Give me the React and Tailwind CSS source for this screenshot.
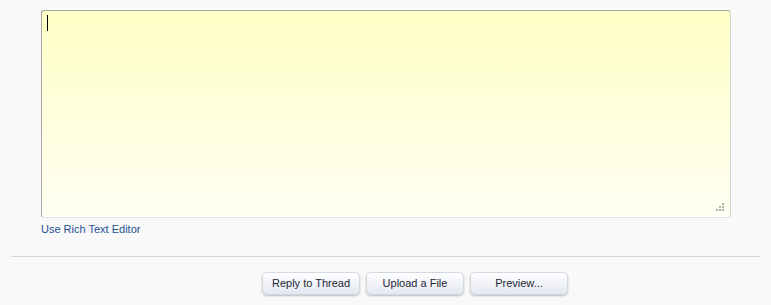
import React from 'react';

const Grip = () => (
    <svg width="9" height="9" viewBox="0 0 9 9" className="absolute right-[5px] bottom-[5px]">
        {[[7, 1], [4, 4], [7, 4], [1, 7], [4, 7], [7, 7]].map(([x, y], i) => (
            <rect key={i} x={x - 1} y={y - 1} width="2" height="2" fill="#b3b3b3" />
        ))}
    </svg>
);

const Button = ({ children, width }) => (
    <button
        className={`${width} h-[23px] rounded-[5px] border border-[#d4d7e0] bg-gradient-to-b from-[#ffffff] to-[#e4e8f2] text-[11px] text-[#1e2633] shadow-[0_1px_2px_rgba(0,0,0,0.25)]`}
    >
        {children}
    </button>
);

export default function App() {
    return (
        <div className="w-full h-[305px] bg-[#f9f9fa] pt-[10px]" style={{ fontFamily: '"Liberation Sans", Arial, sans-serif' }}>
            <div className="relative ml-[41px] w-[690px] h-[208px] rounded-[3px] border border-[#a6a6a6] border-b-[#e2e2e2] border-r-[#d0d0d0] bg-gradient-to-b from-[#ffffc6] to-[#fffff2]">
                <div className="absolute left-[5px] top-[4px] w-px h-[16px] bg-black"></div>
                <Grip />
            </div>
            <div className="ml-[41px] mt-[4px] text-[11px] text-[#1d4f91] leading-[14px]">Use Rich Text Editor</div>
            <div className="mx-[11px] mt-[20px] h-px bg-[#d2d8e2]"></div>
            <div className="flex gap-[6px] pl-[262px] mt-[15px]">
                <Button width="w-[98px]">Reply to Thread</Button>
                <Button width="w-[98px]">Upload a File</Button>
                <Button width="w-[98px]">Preview...</Button>
            </div>
        </div>
    );
}
